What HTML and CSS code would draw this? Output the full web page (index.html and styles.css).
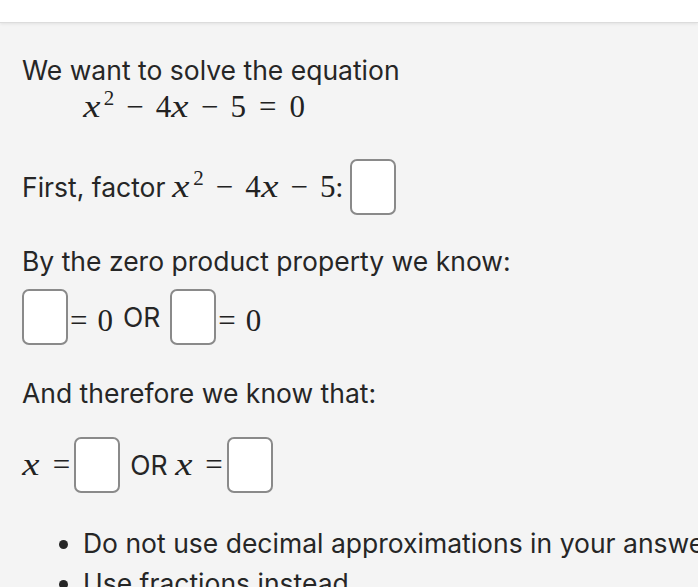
FILE: index.html
```html
<!DOCTYPE html>
<html>
<head>
<meta charset="utf-8">
<link rel="stylesheet" href="styles.css">
</head>
<body>
<div class="topbar"></div>
<main class="content">
  <p class="line l1">We want to solve the equation</p>
  <div class="math display"><span class="mi">x</span><sup class="sup">2</sup><span class="op">−</span><span class="mn">4</span><span class="mi">x</span><span class="op">−</span><span class="mn">5</span><span class="rel">=</span><span class="mn">0</span></div>

  <div class="row r-factor">
    <span class="txt">First, factor</span>
    <span class="math inl"><span class="mi">x</span><sup class="sup">2</sup><span class="op">−</span><span class="mn">4</span><span class="mi">x</span><span class="op">−</span><span class="mn">5</span></span><span class="txt">:</span>
    <span class="box"></span>
  </div>

  <p class="line l3">By the zero product property we know:</p>
  <div class="row r-zero">
    <span class="box"></span>
    <span class="math"><span class="rel eq-after">=</span><span class="mn">0</span></span>
    <span class="txt or">OR</span>
    <span class="box"></span>
    <span class="math"><span class="rel eq-after">=</span><span class="mn">0</span></span>
  </div>

  <p class="line l4">And therefore we know that:</p>
  <div class="row r-x">
    <span class="math"><span class="mi">x</span><span class="rel eq-before">=</span></span>
    <span class="box"></span>
    <span class="txt or">OR</span>
    <span class="math"><span class="mi">x</span><span class="rel eq-before">=</span></span>
    <span class="box"></span>
  </div>

  <ul class="notes">
    <li>Do not use decimal approximations in your answer.</li>
    <li>Use fractions instead.</li>
  </ul>
</main>
</body>
</html>
```

FILE: styles.css
```css
html, body {
  margin: 0;
  padding: 0;
}
body {
  background: #f4f4f4;
  color: #262626;
  font-family: Inter, "Liberation Sans", sans-serif;
  font-size: 26.5px;
  overflow: hidden;
  width: 698px;
  height: 587px;
}
.topbar {
  height: 22px;
  background: #ffffff;
  border-bottom: 1px solid #dcdcdc;
  box-shadow: 0 1px 3px rgba(0,0,0,0.08);
}
.content {
  padding-left: 22px;
  white-space: nowrap;
}
.line {
  margin: 0;
  line-height: 32px;
}
.l1 { margin-top: 31px; }
.math {
  font-family: "Liberation Serif", "DejaVu Serif", serif;
  font-size: 31px;
  color: #222;
}
.display {
  margin-left: 61px;
  line-height: 36px;
  margin-top: 3px;
}
.mi {
  font-style: italic;
  display: inline-block;
  transform: scaleX(1.25);
  margin: 0 2px;
}
.sup {
  font-size: 21px;
  vertical-align: 12px;
  line-height: 0;
  margin-left: 3px;
}
.op { margin: 0 12px; }
.rel { margin: 0 13px; }
.row {
  display: flex;
  align-items: center;
}
.r-factor { margin-top: 34px; height: 56px; }
.inl { margin-left: 7px; }
.box {
  display: inline-block;
  width: 42px;
  height: 52px;
  border: 2px solid #8a8a8a;
  border-radius: 7px;
  background: #ffffff;
  flex: none;
}
.r-factor .box { margin-left: 7px; }
.l3 { margin-top: 30px; }
.r-zero { margin-top: 12px; height: 56px; }
.r-zero .math { margin-top: 8px; }
.eq-after { margin: 0 10px 0 2px; }
.or { margin: 0 10px 0 10px; }
.l4 { margin-top: 32px; }
.r-x { margin-top: 28px; height: 56px; }
.eq-before { margin: 0 4px 0 13px; }
.r-x .or { margin: 0 7px 0 10px; }
.notes {
  margin: 30px 0 0 0;
  padding-left: 61px;
  line-height: 40px;
}
```
